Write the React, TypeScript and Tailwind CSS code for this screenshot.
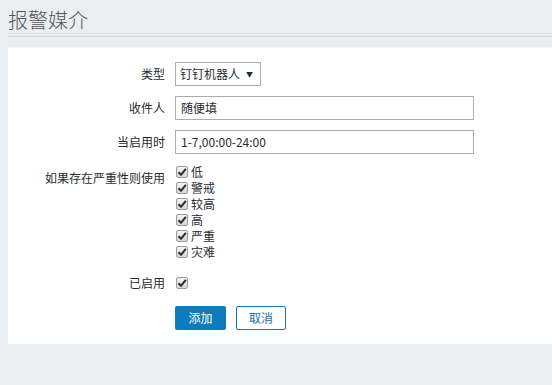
import React from "react";

const font = { fontFamily: '"Noto Sans CJK SC", "Liberation Sans", sans-serif' };

function Check() {
  return (
    <span className="inline-flex h-[12px] w-[12px] shrink-0 items-center justify-center rounded-[2px] border border-[#9d9d9d] bg-gradient-to-b from-[#f2f2f2] to-[#d6d6d6]">
      <svg width="10" height="10" viewBox="0 0 10 10">
        <path d="M1.5 5.2 L4 7.8 L8.8 1.8" fill="none" stroke="#2d2d2d" strokeWidth="2" strokeLinejoin="round" />
      </svg>
    </span>
  );
}

export default function App() {
  const levels = ["低", "警戒", "较高", "高", "严重", "灾难"];
  return (
    <div className="h-[385px] w-[552px] overflow-hidden bg-[#ebeef1] text-[12px] text-[#1f2c33]" style={font}>
      <div className="pl-[8px] pt-[7px]">
        <div className="text-[20px] font-light leading-[26px] text-[#555]">报警媒介</div>
        <div className="h-[1px] bg-[#dfe3e7]" />
        <div className="mt-[2px] h-[1px] bg-[#d3d7db]" />
      </div>
      <div className="ml-[8px] mt-[10px] h-[297px] border-t border-[#f3f4f6] bg-white pt-[14px]">
        <div className="grid grid-cols-[157px_1fr] items-center gap-x-[10px]">
          <div className="text-right">类型</div>
          <div className="flex h-[24px] w-[86px] items-center justify-between border border-[#acacac] bg-white pl-[4px] pr-[7px]">
            <span>钉钉机器人</span>
            <span className="text-[7px]">▼</span>
          </div>

          <div className="mt-[10px] text-right">收件人</div>
          <div className="mt-[10px] flex h-[24px] w-[299px] items-center border border-[#acacac] pl-[5px]">随便填</div>

          <div className="mt-[10px] text-right">当启用时</div>
          <div className="mt-[10px] flex h-[24px] w-[299px] items-center border border-[#acacac] pl-[5px]">1-7,00:00-24:00</div>

          <div className="mt-[10px] self-start pt-[5px] text-right">如果存在严重性则使用</div>
          <div className="mt-[10px] flex flex-col pl-[1px]">
            {levels.map((l) => (
              <label key={l} className="flex h-[16px] items-center gap-[3px] leading-[16px]">
                <Check />
                <span>{l}</span>
              </label>
            ))}
          </div>

          <div className="mt-[14px] text-right">已启用</div>
          <div className="mt-[14px] flex h-[16px] items-center pl-[1px]">
            <Check />
          </div>

          <div />
          <div className="mt-[14px] flex gap-[10px]">
            <button className="h-[24px] w-[51px] rounded-[2px] bg-[#0b7cbe] text-[12px] text-white">添加</button>
            <button className="h-[24px] w-[50px] rounded-[2px] border border-[#1d73b3] bg-white text-[12px] text-[#1d6aa5]">取消</button>
          </div>
        </div>
      </div>
    </div>
  );
}
